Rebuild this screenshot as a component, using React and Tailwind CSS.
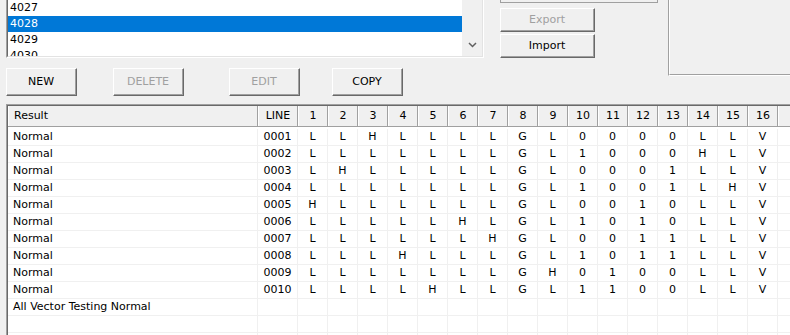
import React from 'react';

const font = { fontFamily: '"DejaVu Sans", Verdana, sans-serif' };

const rows = [
  ['0001', 'LLHLLLLGL0000LLV'],
  ['0002', 'LLLLLLLGL1000HLV'],
  ['0003', 'LHLLLLLGL0001LLV'],
  ['0004', 'LLLLLLLGL1001LHV'],
  ['0005', 'HLLLLLLGL0010LLV'],
  ['0006', 'LLLLLHLGL1010LLV'],
  ['0007', 'LLLLLLHGL0011LLV'],
  ['0008', 'LLLHLLLGL1011LLV'],
  ['0009', 'LLLLLLLGH0100LLV'],
  ['0010', 'LLLLHLLGL1100LLV'],
];

const nums = Array.from({ length: 16 }, (_, i) => String(i + 1));

const Button = ({ children, disabled, className = '' }) => (
  <div
    className={`flex items-center justify-center border-t border-l border-white border-r border-b border-r-[#696969] border-b-[#696969] bg-[#f0f0f0] ${className}`}
  >
    <div className="w-full h-full flex items-center justify-center pt-px border-r border-b border-[#a0a0a0]">
      <span className={disabled ? 'text-[#a0a0a0]' : 'text-black'}>{children}</span>
    </div>
  </div>
);

const HeadCell = ({ children, className = '' }) => (
  <div className={`h-full shrink-0 flex items-center border-l border-white border-r border-r-[#a0a0a0] ${className}`}>
    {children}
  </div>
);

const Row = ({ result, line, cells, first }) => (
  <div className={`flex shrink-0 border-b border-[#f0f0f0] bg-white ${first ? 'h-[19px] pt-[2px]' : 'h-[17px]'}`}>
    <div className="w-[250px] shrink-0 pl-[5px] border-r border-[#f0f0f0] flex items-center">{result}</div>
    <div className="w-[40px] shrink-0 border-r border-[#f0f0f0] flex items-center justify-center">{line}</div>
    {nums.map((n, i) => (
      <div key={n} className="w-[30px] shrink-0 border-r border-[#f0f0f0] flex items-center justify-center">
        {cells ? cells[i] : ''}
      </div>
    ))}
    <div className="w-[30px] shrink-0 border-r border-[#f0f0f0]" />
  </div>
);

export default function App() {
  return (
    <div className="w-[790px] h-[335px] overflow-hidden bg-[#f0f0f0] text-[11px] text-black" style={font}>
      {/* top area */}
      <div className="flex h-[67px] items-start">
        <div className="ml-[6px] w-[478px] h-[58px] shrink-0 flex border-l border-[#a0a0a0] border-r border-r-white border-b border-b-white">
          <div className="flex-1 flex border-l border-[#696969] border-r border-r-[#e3e3e3] border-b border-b-[#e3e3e3] bg-white">
            <div className="flex-1 overflow-hidden">
              <div className="h-[16px] pl-[2px] flex items-center">4027</div>
              <div className="h-[16px] pl-[2px] flex items-center bg-[#0078d7] text-white">4028</div>
              <div className="h-[16px] pl-[2px] flex items-center">4029</div>
              <div className="h-[16px] pl-[2px] flex items-center">4030</div>
            </div>
            <div className="w-[20px] bg-[#f0f0f0] flex flex-col justify-end items-center pb-[8px]">
              <svg width="9" height="6" viewBox="0 0 9 6">
                <polyline points="1,1 4.5,4.5 8,1" fill="none" stroke="#606060" strokeWidth="1.5" />
              </svg>
            </div>
          </div>
        </div>

        <div className="ml-[16px] shrink-0 flex flex-col">
          <div className="w-[158px] h-[3px] border-x border-b border-[#a0a0a0]" />
          <Button disabled className="mt-[5px] w-[95px] h-[24px]">Export</Button>
          <Button className="mt-[2px] w-[95px] h-[24px]">Import</Button>
        </div>

        <div className="ml-[10px] w-[122px] h-[76px] shrink-0 border-l border-[#a0a0a0] border-b border-b-white">
          <div className="w-full h-full border-l border-white border-b border-b-[#a0a0a0]" />
        </div>
      </div>

      {/* action buttons */}
      <div className="flex mt-[1px]">
        <Button className="ml-[6px] w-[71px] h-[28px]">NEW</Button>
        <Button disabled className="ml-[36px] w-[71px] h-[28px]">DELETE</Button>
        <Button disabled className="ml-[45px] w-[71px] h-[28px]">EDIT</Button>
        <Button className="ml-[32px] w-[71px] h-[28px]">COPY</Button>
      </div>

      {/* grid */}
      <div className="ml-[6px] mt-[8px] border-l border-t border-[#a0a0a0]">
        <div className="border-l border-t border-[#696969] flex flex-col">
          <div className="h-[21px] flex shrink-0 bg-[#f0f0f0] border-b border-[#a0a0a0]">
            <HeadCell className="w-[250px] pl-[5px]">Result</HeadCell>
            <HeadCell className="w-[40px] justify-center">LINE</HeadCell>
            {nums.map((n) => (
              <HeadCell key={n} className="w-[30px] justify-center">{n}</HeadCell>
            ))}
            <HeadCell className="w-[30px]" />
          </div>
          {rows.map(([line, vals], i) => (
            <Row key={line} first={i === 0} result="Normal" line={line} cells={vals.split('')} />
          ))}
          <Row result="All Vector Testing Normal" line="" />
          <Row result="" line="" />
          <Row result="" line="" />
        </div>
      </div>
    </div>
  );
}
